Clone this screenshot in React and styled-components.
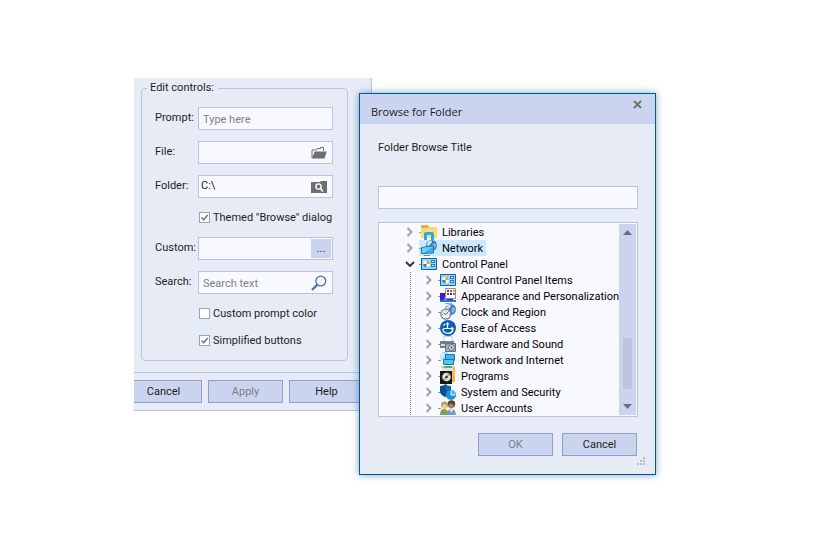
import React, { useState } from "react";
import styled, { createGlobalStyle, css } from "styled-components";

const colors = {
  window: "#e7ebf6",
  bar: "#cbd4ee",
  field: "#f8f9fe",
  line: "#b9c3df",
  buttonLine: "#8f9fc9",
  text: "#1e1e1e",
  muted: "#7d8087",
  icon: "#6f6f6f",
  accent: "#005a94",
};

const GlobalStyle = createGlobalStyle`
  * {
    box-sizing: border-box;
  }
  body {
    margin: 0;
    background: #fff;
    color: ${colors.text};
    font: 11px/16px Roboto, "Liberation Sans", sans-serif;
  }
  input,
  button {
    font: inherit;
    color: inherit;
  }
`;

const Desktop = styled.main`
  position: relative;
  min-height: 100vh;
  overflow: hidden;
`;

const SettingsWindow = styled.form`
  position: absolute;
  left: 134px;
  top: 78px;
  width: 238px;
  background: ${colors.window};
  border-right: 1px solid ${colors.line};
  border-bottom: 1px solid ${colors.line};
`;

const Group = styled.fieldset`
  min-width: 0;
  margin: 2px 23px 11px 7px;
  padding: 11px 14px 11px 13px;
  border: 1px solid ${colors.line};
  border-radius: 4px;
  display: flex;
  flex-direction: column;
  gap: 11px;
`;

const GroupTitle = styled.legend`
  margin-left: -8px;
  padding: 0 4px 0 3px;
`;

const Row = styled.div`
  display: grid;
  grid-template-columns: 43px minmax(0, 1fr);
  align-items: center;
`;

const RowLabel = styled.label`
  padding-bottom: 1px;
  white-space: nowrap;
`;

const Field = styled.div`
  display: flex;
  align-items: center;
  height: 23px;
  padding: 1px;
  background: ${colors.field};
  border: 1px solid ${colors.line};
`;

const FieldInput = styled.input`
  flex: 1;
  min-width: 0;
  height: 100%;
  padding: ${(props) => (props.$tight ? "0 0 2px 1px" : "2px 0 0 3px")};
  border: 0;
  background: none;
  outline: none;
  &::placeholder {
    color: ${colors.muted};
    opacity: 1;
  }
`;

const FieldButton = styled.button`
  display: flex;
  align-items: center;
  justify-content: center;
  width: ${(props) => (props.$filled ? 20 : 24)}px;
  height: 19px;
  padding: 0;
  border: 0;
  color: ${(props) => (props.$filled ? colors.text : colors.icon)};
  background: ${(props) => (props.$filled ? colors.bar : "none")};
`;

const Checks = styled.div`
  display: flex;
  flex-direction: column;
  gap: 10px;
  margin-left: 44px;
`;

const CheckLabel = styled.label`
  display: flex;
  align-items: center;
  gap: 3px;
  height: 17px;
  white-space: nowrap;
`;

const checkMark =
  "<svg xmlns='http://www.w3.org/2000/svg' viewBox='0 0 9 9'><path d='M1.5 4.5 3.7 6.7 7.7 2' fill='none' stroke='#6f6f6f' stroke-width='1.5'/></svg>";

const CheckBox = styled.input`
  appearance: none;
  flex: none;
  width: 11px;
  height: 11px;
  margin: 0;
  background: #fff;
  border: 1px solid #8fa3cf;
  &:checked {
    background-image: url("data:image/svg+xml,${encodeURIComponent(checkMark).replace(/'/g, "%27")}");
  }
`;

const Button = styled.button`
  flex: 0 0 75px;
  height: 23px;
  padding: 1px 0 0;
  border: 1px solid ${colors.buttonLine};
  background: ${colors.bar};
  &:disabled {
    color: ${colors.muted};
  }
`;

const SettingsFooter = styled.footer`
  display: flex;
  gap: 6px;
  padding: 7px 7px 7px 0;
  border-top: 1px solid ${colors.line};
  ${Button}:first-child {
    flex-basis: 68px;
    padding-right: 8px;
    border-left: 0;
  }
`;

const DialogWindow = styled.section`
  position: absolute;
  left: 359px;
  top: 93px;
  width: 297px;
  background: ${colors.window};
  border: 1px solid ${colors.accent};
  box-shadow: 0 0 7px rgba(0, 90, 148, 0.55);
`;

const TitleBar = styled.header`
  display: flex;
  justify-content: space-between;
  height: 30px;
  padding: 0 13px 0 11px;
  background: ${colors.bar};
`;

const Title = styled.h1`
  margin: 0;
  padding-top: 6px;
  font: 11px/24px "Open Sans", "Noto Sans", sans-serif;
`;

const CloseButton = styled.button`
  width: 9px;
  height: 9px;
  margin-top: 6px;
  padding: 0;
  border: 0;
  background: none;
  svg {
    display: block;
  }
`;

const DialogBody = styled.div`
  display: flex;
  flex-direction: column;
  padding: 16px 17px 18px 18px;
`;

const FolderLabel = styled.label`
  margin-bottom: 30px;
`;

const TreeBox = styled.div`
  display: flex;
  height: 195px;
  margin-top: 13px;
  padding: 1px;
  background: ${colors.field};
  border: 1px solid ${colors.line};
`;

const Tree = styled.ul`
  flex: 1;
  min-width: 0;
  margin: 0;
  padding: 0 0 0 25px;
  overflow: hidden;
  list-style: none;
  line-height: 18px;
  color: #000;
`;

const Branch = styled.ul`
  height: 145px;
  margin: 0 0 0 5px;
  padding: 0 0 0 13px;
  border-left: 1px dotted #777;
  list-style: none;
`;

const NodeRow = styled.div`
  display: flex;
  align-items: center;
  height: 16px;
  white-space: nowrap;
`;

const Expander = styled.button`
  display: flex;
  align-items: center;
  justify-content: center;
  width: 10px;
  height: 16px;
  margin-right: 4px;
  padding: 0;
  border: 0;
  background: none;
`;

const NodeItem = styled.span`
  display: flex;
  align-items: flex-start;
  height: 16px;
  padding-right: 3px;
  ${(props) =>
    props.$selected &&
    css`
      background: #cce8ff;
    `}
  &::before {
    content: "";
    align-self: center;
    width: 2px;
    border-top: 1px dotted #999;
  }
  svg {
    flex: none;
    margin-right: 5px;
  }
`;

const ScrollBar = styled.div`
  display: flex;
  flex-direction: column;
  align-items: center;
  width: 17px;
  background: ${colors.bar};
`;

const ScrollButton = styled.button`
  display: flex;
  align-items: center;
  justify-content: center;
  width: 17px;
  height: 17px;
  padding: 0;
  border: 0;
  background: none;
`;

const Track = styled.div`
  flex: 1;
  display: flex;
  align-items: flex-end;
  padding-bottom: 9px;
`;

const Thumb = styled.div`
  width: 9px;
  height: 51px;
  background: #bbc5dd;
`;

const DialogFooter = styled.footer`
  display: flex;
  justify-content: flex-end;
  gap: 9px;
  margin-top: 16px;
  padding-right: 1px;
`;

const Grip = styled.svg`
  position: absolute;
  right: 10px;
  bottom: 9px;
`;

const FolderOpenIcon = () => (
  <svg width="16" height="14" viewBox="0 0 16 14">
    <path d="M1 12V4h4l1-1.500h3.500V1.500h3V5" fill="none" stroke="#6f6f6f" />
    <path d="M3.800 5.500H15.800L13.500 12.500H.8z" fill="#6f6f6f" />
  </svg>
);

const FolderSearchIcon = () => (
  <svg width="16" height="14" viewBox="0 0 16 14">
    <path d="M0 2h9l1-1h6v12H0z" fill="#6f6f6f" />
    <circle cx="7.500" cy="6.500" r="2.600" fill="none" stroke="#fff" strokeWidth="1.400" />
    <path d="m9.500 8.500 2.500 3" stroke="#fff" strokeWidth="1.600" />
  </svg>
);

const SearchIcon = () => (
  <svg width="16" height="16" viewBox="0 0 16 16">
    <circle cx="9.800" cy="6" r="4.900" fill="none" stroke="#4a72a8" strokeWidth="1.300" />
    <path d="M6.400 9.600 1 15" stroke="#4a72a8" strokeWidth="2.200" />
  </svg>
);

const CloseIcon = () => (
  <svg width="9" height="9" viewBox="0 0 9 9">
    <path d="m1 1 7 7m0-7-7 7" stroke="#6f6f6f" strokeWidth="1.800" />
  </svg>
);

const Chevron = ({ open }) => (
  <svg width="10" height="10" viewBox="0 0 10 10" fill="none" strokeWidth="1.900">
    {open ? (
      <path d="m1 3 4 4 4-4" stroke="#333" />
    ) : (
      <path d="m2.500 1 4 4-4 4" stroke="#a0a0a0" />
    )}
  </svg>
);

const globe = (
  <>
    <circle cx="10.500" cy="5.500" r="5.500" fill="#3d79b5" />
    <path d="M7 1.500c2-1.500 4-1 4 .5S8.500 4 8 6L5.500 5z" fill="#c5e1f4" />
    <path d="M12 3.500c2-.5 3 .5 3.500 2L13 9.500 11 7z" fill="#79b5e2" />
  </>
);

const glyphs = {
  libraries: (
    <>
      <path d="M0 2V1h7l1 2h8v3H0z" fill="#e5b13d" />
      <path d="M0 4h7l1-1h8v11H0z" fill="#ffda76" />
      <path d="M3 16V10Q3 8 5 8h6Q13 8 13 10v6h-3v-5H6v5z" fill="#29abe8" />
    </>
  ),
  network: (
    <>
      {globe}
      <path d="m.5 7.500 12-1.500v7l-12 .5z" fill="#42b2ec" stroke="#1979b5" />
      <path d="m1 8 11-1.500L3 13H1z" fill="#70ccf7" />
      <path d="M3 15.500h6" stroke="#7b8791" />
    </>
  ),
  panel: (
    <>
      <path d="M.5 2.500h15v11H.5z" fill="#8fd6fa" stroke="#1a5f98" />
      <circle cx="5.500" cy="8" r="3.300" fill="#fff" />
      <path d="M5.500 8H2.200A3.300 3.300 0 0 0 5.500 11.300z" fill="#2383cc" />
      <path d="M5.500 8V4.500A3.300 3.300 0 0 1 8.800 8z" fill="#f7a01c" />
      <path d="M10 4h4v3h-4zM10 8h4v3h-4z" fill="#1b7fc4" />
      <path d="M11 5.500h2m-2 4h2" stroke="#d6f0fd" />
    </>
  ),
  appearance: (
    <>
      <path d="M0 5h13v9H0z" fill="#4a10d8" />
      <path d="m3 14 3-9h4l-4 9z" fill="#2d9df4" />
      <path d="M5.500.5h10v10h-10z" fill="#fff" stroke="#84919c" />
      <path d="M7 2h2v2H7z" fill="#a32060" />
      <path d="M10 2h2v2h-2z" fill="#e3453b" />
      <path d="M13 2h2v2h-2z" fill="#f29728" />
      <path d="M7 5h2v2H7z" fill="#4b49b5" />
      <path d="M10 5h2v2h-2z" fill="#252c80" />
      <path d="M13 5h2v2h-2z" fill="#e54f35" />
      <path d="M0 13h16" stroke="#1d78d6" strokeWidth="2" />
      <path d="M5 15.500h7" stroke="#a7a7a7" />
    </>
  ),
  clock: (
    <>
      {globe}
      <circle cx="5.800" cy="10.200" r="5" fill="#eef2f4" stroke="#7c8790" strokeWidth="1.300" />
      <path d="M5.800 10.500 8.500 7.500M5.800 10.500 3.500 9" stroke="#525f69" fill="none" />
      <path d="M5.800 6.500v1m0 6v1M2 10.500h1m6 0h1" stroke="#828b92" />
    </>
  ),
  ease: (
    <>
      <circle cx="8" cy="8" r="8" fill="#0b62b5" />
      <path d="M13 9.500a5.200 5.200 0 0 1-10.200-.5M3.500 5.500 5 4" stroke="#fff" strokeWidth="1.300" fill="none" />
      <path d="M7.500 4v4.500H13M7.500 8.500H3" stroke="#fff" strokeWidth="1.200" fill="none" />
      <path d="m5.500 4.500 2-2.500 2 2.500zM11.500 6.500 14 8.500l-2.500 2z" fill="#fff" />
    </>
  ),
  hardware: (
    <>
      <path d="M4 6V.5h8V6" fill="#fff" stroke="#c7cbce" />
      <path d="M0 5h14v7H0z" fill="#777e85" />
      <path d="M1 8h4v2H1z" fill="#d9dcde" />
      <path d="M5.500 8.500 8 7.500h7.500v8h-10z" fill="#a7acb8" stroke="#696f7a" />
      <circle cx="11.500" cy="11.500" r="2.900" fill="#dce2ef" stroke="#596174" />
      <circle cx="11.500" cy="11.500" r="1" fill="#38425e" />
    </>
  ),
  internet: (
    <>
      <circle cx="4.500" cy="4" r="4.500" fill="#a8dcf7" />
      <path d="M1 1h3L3 6 1 5z" fill="#e7f5fc" />
      <path d="M5.500 2.500h9v6h-9z" fill="#43b4ec" stroke="#1678b5" />
      <path d="M3.500 7.500h10v5h-10z" fill="#54c4f5" stroke="#1678b5" />
      <path d="M1 15h14" stroke="#c8d0cc" strokeWidth="2" />
      <path d="M4 15h8" stroke="#45bd4e" strokeWidth="2" />
    </>
  ),
  programs: (
    <>
      <path d="M6 0h9v14H6z" fill="#f6b64b" />
      <path d="M3 0h9v4H3z" fill="#83ce7c" />
      <path d="M2 0h11v3H2z" fill="#dfe9e2" />
      <path d="M0 3h12v13H0z" fill="#191919" />
      <circle cx="6.500" cy="9" r="4.300" fill="#e0e0df" />
      <path d="M6.500 9 8 5l2.500 2zM6.500 9 3 11l2 2z" fill="#9d9d9d" />
      <circle cx="6.500" cy="9" r="1.300" fill="#303030" />
    </>
  ),
  system: (
    <>
      <path d="M0 2Q4 2.500 5.500 0 8 2.500 11 2v5q0 4-5.500 6Q0 10.500 0 7z" fill="#1164ad" />
      <path d="M5.500 0v13Q0 10.500 0 7V2Q4 2.500 5.500 0z" fill="#0b4f90" />
      <circle cx="11" cy="11" r="5" fill="#1d91dc" />
      <path d="M11 11V6a5 5 0 0 1 5 5z" fill="#55b6f0" />
      <path d="M11 7v4h4" stroke="#eaf7ff" fill="none" />
    </>
  ),
  users: (
    <>
      <path d="M0 15q0-6 4-6t5 6z" fill="#7da34c" />
      <circle cx="4.500" cy="5" r="3.500" fill="#bb9a52" />
      <circle cx="4.500" cy="6.500" r="2.500" fill="#f0c9a0" />
      <path d="M6.500 16q0-7 5-7 4.500 0 4.500 7z" fill="#7799c8" />
      <circle cx="11.500" cy="4" r="3.700" fill="#59412f" />
      <circle cx="11" cy="6" r="2.500" fill="#ba7f58" />
      <path d="m9.500 9.500 2 3 1.500-3z" fill="#fff" />
    </>
  ),
};

const NodeIcon = ({ name }) => (
  <svg width="16" height="16" viewBox="0 0 16 16">
    {glyphs[name]}
  </svg>
);

const controlPanelItems = [
  { icon: "panel", name: "All Control Panel Items" },
  { icon: "appearance", name: "Appearance and Personalization" },
  { icon: "clock", name: "Clock and Region" },
  { icon: "ease", name: "Ease of Access" },
  { icon: "hardware", name: "Hardware and Sound" },
  { icon: "internet", name: "Network and Internet" },
  { icon: "programs", name: "Programs" },
  { icon: "system", name: "System and Security" },
  { icon: "users", name: "User Accounts" },
];

const folders = [
  { icon: "libraries", name: "Libraries" },
  { icon: "network", name: "Network" },
  { icon: "panel", name: "Control Panel", children: controlPanelItems },
];

const TreeNode = ({ node, selected, onSelect }) => (
  <li>
    <NodeRow>
      <Expander type="button" aria-label={node.name}>
        <Chevron open={!!node.children} />
      </Expander>
      <NodeItem
        $selected={node.name === selected}
        onClick={() => onSelect(node.name)}
      >
        <NodeIcon name={node.icon} />
        {node.name}
      </NodeItem>
    </NodeRow>
    {node.children && (
      <Branch>
        {node.children.map((child) => (
          <TreeNode
            key={child.name}
            node={child}
            selected={selected}
            onSelect={onSelect}
          />
        ))}
      </Branch>
    )}
  </li>
);

const FormRow = ({ id, label, button, ...inputProps }) => (
  <Row>
    <RowLabel htmlFor={id}>{label}</RowLabel>
    <Field>
      <FieldInput id={id} type="text" {...inputProps} />
      {button}
    </Field>
  </Row>
);

const Check = ({ label, checked }) => (
  <CheckLabel>
    <CheckBox type="checkbox" defaultChecked={checked} />
    {label}
  </CheckLabel>
);

const Settings = () => (
  <SettingsWindow>
    <Group>
      <GroupTitle>Edit controls:</GroupTitle>
      <FormRow id="prompt" label="Prompt:" placeholder="Type here" />
      <FormRow
        id="file"
        label="File:"
        button={
          <FieldButton type="button" aria-label="Open file">
            <FolderOpenIcon />
          </FieldButton>
        }
      />
      <FormRow
        id="folder"
        label="Folder:"
        defaultValue="C:\"
        $tight
        button={
          <FieldButton type="button" aria-label="Browse folder">
            <FolderSearchIcon />
          </FieldButton>
        }
      />
      <Checks>
        <Check label={'Themed "Browse" dialog'} checked />
      </Checks>
      <FormRow
        id="custom"
        label="Custom:"
        button={
          <FieldButton type="button" $filled>
            ...
          </FieldButton>
        }
      />
      <FormRow
        id="search"
        label="Search:"
        placeholder="Search text"
        button={
          <FieldButton type="button" aria-label="Search">
            <SearchIcon />
          </FieldButton>
        }
      />
      <Checks>
        <Check label="Custom prompt color" />
        <Check label="Simplified buttons" checked />
      </Checks>
    </Group>
    <SettingsFooter>
      <Button type="button">Cancel</Button>
      <Button type="button" disabled>
        Apply
      </Button>
      <Button type="button">Help</Button>
    </SettingsFooter>
  </SettingsWindow>
);

const BrowseDialog = () => {
  const [selected, setSelected] = useState("Network");
  return (
    <DialogWindow role="dialog" aria-labelledby="dialog-title">
      <TitleBar>
        <Title id="dialog-title">Browse for Folder</Title>
        <CloseButton type="button" aria-label="Close">
          <CloseIcon />
        </CloseButton>
      </TitleBar>
      <DialogBody>
        <FolderLabel htmlFor="folder-name">Folder Browse Title</FolderLabel>
        <Field>
          <FieldInput id="folder-name" type="text" />
        </Field>
        <TreeBox>
          <Tree>
            {folders.map((node) => (
              <TreeNode
                key={node.name}
                node={node}
                selected={selected}
                onSelect={setSelected}
              />
            ))}
          </Tree>
          <ScrollBar>
            <ScrollButton type="button" aria-label="Scroll up">
              <svg width="9" height="5" viewBox="0 0 9 5">
                <path d="M0 5 4.500 0 9 5z" fill="#6f6f6f" />
              </svg>
            </ScrollButton>
            <Track>
              <Thumb />
            </Track>
            <ScrollButton type="button" aria-label="Scroll down">
              <svg width="9" height="5" viewBox="0 0 9 5">
                <path d="M0 0 4.500 5 9 0z" fill="#6f6f6f" />
              </svg>
            </ScrollButton>
          </ScrollBar>
        </TreeBox>
        <DialogFooter>
          <Button type="button" disabled>
            OK
          </Button>
          <Button type="button">Cancel</Button>
        </DialogFooter>
      </DialogBody>
      <Grip width="8" height="8" viewBox="0 0 8 8">
        <path
          d="M6 0h2v2H6zM3 3h2v2H3zM6 3h2v2H6zM0 6h2v2H0zM3 6h2v2H3zM6 6h2v2H6z"
          fill="#b9bcc5"
        />
      </Grip>
    </DialogWindow>
  );
};

const App = () => (
  <>
    <GlobalStyle />
    <Desktop>
      <Settings />
      <BrowseDialog />
    </Desktop>
  </>
);

export default App;
